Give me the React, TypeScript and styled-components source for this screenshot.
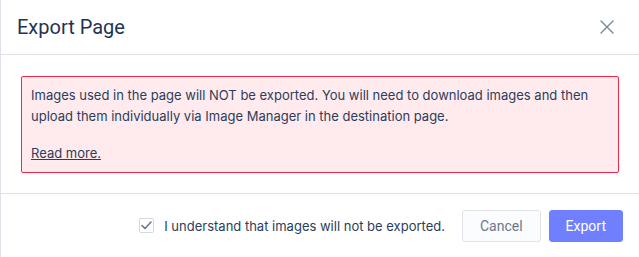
import React, { useState } from "react";
import styled, { createGlobalStyle } from "styled-components";

const Global = createGlobalStyle`
  html, body { margin: 0; padding: 0; background: #ffffff; }
  body { font-family: Inter, "Noto Sans", sans-serif; }
  * { box-sizing: border-box; }
`;

const Modal = styled.div`
  width: 639px;
  height: 257px;
  background: #ffffff;
  border-left: 1px solid #dfe2e8;
  display: flex;
  flex-direction: column;
`;

const Header = styled.div`
  height: 55px;
  display: flex;
  align-items: center;
  justify-content: space-between;
  padding: 0 22px 0 16px;
  border-bottom: 1px solid #dfe2e8;
`;

const Title = styled.h2`
  margin: 0;
  font-family: Roboto, "Liberation Sans", sans-serif;
  font-size: 20px;
  font-weight: 400;
  color: #1e3454;
`;

const CloseButton = styled.button`
  width: 20px;
  height: 20px;
  padding: 0;
  border: none;
  background: none;
  display: flex;
  align-items: center;
  justify-content: center;
  color: #7a8599;
  cursor: pointer;
`;

const Body = styled.div`
  padding: 21px 20px 20px 20px;
  border-bottom: 1px solid #dfe2e8;
`;

const Alert = styled.div`
  background: #ffebee;
  border: 1px solid #f0284a;
  border-radius: 2px;
  padding: 8px 10px 8px 9px;
  font-size: 13px;
  line-height: 21px;
  color: #2c3d5c;
`;

const Para = styled.p`
  margin: 0 0 16px 0;
`;

const Link = styled.a`
  color: #2c3d5c;
  text-decoration: underline;
  display: block;
`;

const Footer = styled.div`
  flex: 1;
  display: flex;
  align-items: center;
  justify-content: flex-end;
  padding: 0 16px 0 0;
  gap: 8px;
`;

const CheckLabel = styled.label`
  display: flex;
  align-items: center;
  gap: 10px;
  font-size: 13px;
  color: #2c3d5c;
  margin-right: 9px;
  cursor: pointer;
`;

const Box = styled.span`
  width: 15px;
  height: 15px;
  border: 1px solid #d4d8e0;
  border-radius: 2px;
  background: #fff;
  display: flex;
  align-items: center;
  justify-content: center;
  color: #6b778c;
`;

const Button = styled.button<{ $primary?: boolean }>`
  height: 32px;
  padding: 0 ${(p) => (p.$primary ? "16px" : "17px")};
  border-radius: 3px;
  font-family: Roboto, "Liberation Sans", sans-serif;
  font-size: 14px;
  cursor: pointer;
  border: 1px solid ${(p) => (p.$primary ? "#6f7ffe" : "#dfe2e8")};
  background: ${(p) => (p.$primary ? "#6f7ffe" : "#fbfcfd")};
  color: ${(p) => (p.$primary ? "#ffffff" : "#6b778c")};
`;

export default function App() {
  const [checked, setChecked] = useState(true);
  return (
    <>
      <Global />
      <Modal>
        <Header>
          <Title>Export Page</Title>
          <CloseButton aria-label="Close">
            <svg width="14" height="14" viewBox="0 0 14 14" fill="none" stroke="currentColor" strokeWidth="1.4" strokeLinecap="round">
              <path d="M1 1 L13 13 M13 1 L1 13" />
            </svg>
          </CloseButton>
        </Header>
        <Body>
          <Alert>
            <Para>
              Images used in the page will NOT be exported. You will need to download images and then upload them
              individually via Image Manager in the destination page.
            </Para>
            <Link href="#">Read more.</Link>
          </Alert>
        </Body>
        <Footer>
          <CheckLabel onClick={() => setChecked(!checked)}>
            <Box>
              {checked && (
                <svg width="11" height="9" viewBox="0 0 11 9" fill="none" stroke="currentColor" strokeWidth="1.6" strokeLinecap="round" strokeLinejoin="round">
                  <path d="M1 4.5 L4 7.5 L10 1" />
                </svg>
              )}
            </Box>
            I understand that images will not be exported.
          </CheckLabel>
          <Button>Cancel</Button>
          <Button $primary>Export</Button>
        </Footer>
      </Modal>
    </>
  );
}
